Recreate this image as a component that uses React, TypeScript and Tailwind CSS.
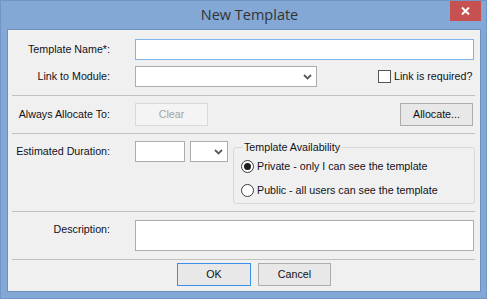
import React from "react";

const font = { fontFamily: '"Liberation Sans", Arial, sans-serif' };

function Chevron() {
  return (
    <svg width="9" height="6" viewBox="0 0 9 6" className="shrink-0">
      <path d="M1 1 L4.5 4.5 L8 1" fill="none" stroke="#5a5a5a" strokeWidth="1.8" />
    </svg>
  );
}

function Label({ children, className = "" }: { children: React.ReactNode; className?: string }) {
  return (
    <div className={`w-[102px] shrink-0 text-right text-[10.7px] leading-[13px] text-[#101020] ${className}`}>
      {children}
    </div>
  );
}

function Sep() {
  return <div className="ml-[4px] h-px w-[463px] shrink-0 bg-[#c1c1c1]" />;
}

function Button({
  children,
  className = "",
  disabled = false,
  focused = false,
}: {
  children: React.ReactNode;
  className?: string;
  disabled?: boolean;
  focused?: boolean;
}) {
  const cls = disabled
    ? "border-[#d9d9d9] bg-[#f4f4f4] text-[#a3a3a3]"
    : focused
    ? "border-[#3c8fe8] bg-[#e8e8e8] text-[#101010]"
    : "border-[#adadad] bg-[#e8e8e8] text-[#101010]";
  return (
    <div
      className={`flex h-[23px] shrink-0 items-center justify-center border text-[10.7px] ${cls} ${className}`}
    >
      {children}
    </div>
  );
}

function Radio({ checked, label }: { checked: boolean; label: string }) {
  return (
    <div className="flex items-center">
      <div className="flex h-[13px] w-[13px] items-center justify-center rounded-full border border-[#3c3c3c] bg-white">
        {checked && <div className="h-[7px] w-[7px] rounded-full bg-[#1e1e1e]" />}
      </div>
      <span className="ml-[3px] text-[10.7px] leading-[13px] text-[#101020]">{label}</span>
    </div>
  );
}

export default function App() {
  return (
    <div
      style={font}
      className="flex h-[299px] w-[487px] flex-col border border-[#7196c6] bg-[#83a8d6]"
    >
      {/* Title bar */}
      <div className="relative flex h-[28px] shrink-0 items-start">
        <div
          className="flex h-[28px] flex-1 items-center justify-center pl-[12px] text-[14.5px] text-[#333333]"
          style={{ fontFamily: '"Open Sans", "Noto Sans", sans-serif' }}
        >
          New Template
        </div>
        <div className="absolute right-[5px] top-0 flex h-[20px] w-[31px] items-center justify-center bg-[#c75050]">
          <svg width="9" height="8" viewBox="0 0 9 8">
            <path d="M1 0.5 L8 7.5 M8 0.5 L1 7.5" stroke="#ffffff" strokeWidth="2" />
          </svg>
        </div>
      </div>

      {/* Client area */}
      <div className="ml-[6px] flex h-[263px] w-[474px] shrink-0 flex-col border border-[#6e90bd] bg-[#f0f0f0]">
        <div className="flex h-[261px] flex-col pt-[9px]">
          {/* Row 1 */}
          <div className="flex h-[21px] items-center">
            <Label>Template Name*:</Label>
            <div className="ml-[25px] h-[21px] w-[339px] border border-[#7eb4ea] bg-white" />
          </div>
          {/* Row 2 */}
          <div className="mt-[6px] flex h-[21px] items-center">
            <Label>Link to Module:</Label>
            <div className="ml-[25px] flex h-[21px] w-[182px] items-center justify-end border border-[#acacac] bg-white pr-[4px]">
              <Chevron />
            </div>
            <div className="ml-[61px] flex items-center">
              <div className="h-[13px] w-[13px] border border-[#555555] bg-white" />
              <span className="ml-[3px] text-[10.7px] leading-[13px] text-[#101020]">Link is required?</span>
            </div>
          </div>
          <div className="mt-[8px]">
            <Sep />
          </div>
          {/* Row 3 */}
          <div className="mt-[7px] flex h-[23px] items-center">
            <Label>Always Allocate To:</Label>
            <Button disabled className="ml-[25px] w-[73px]">
              Clear
            </Button>
            <Button className="ml-auto mr-[7px] w-[73px]">Allocate...</Button>
          </div>
          <div className="mt-[7px]">
            <Sep />
          </div>
          {/* Row 4 */}
          <div className="mt-[7px] flex h-[63px] items-start">
            <div className="flex h-[21px] items-center">
              <Label>Estimated Duration:</Label>
              <div className="ml-[25px] h-[21px] w-[50px] border border-[#acacac] bg-white" />
              <div className="ml-[5px] flex h-[21px] w-[38px] items-center justify-end border border-[#acacac] bg-white pr-[4px]">
                <Chevron />
              </div>
            </div>
            <fieldset className="ml-[5px] h-[63px] w-[242px] rounded-[3px] border border-[#d8d8d8] px-[7px]">
              <legend className="ml-[2px] px-[1px] text-[10.7px] leading-[13px] text-[#101020]">
                Template Availability
              </legend>
              <div className="mt-[6px] flex flex-col gap-[11px]">
                <Radio checked label="Private - only I can see the template" />
                <Radio checked={false} label="Public - all users can see the template" />
              </div>
            </fieldset>
          </div>
          <div className="mt-[7px]">
            <Sep />
          </div>
          {/* Row 5 */}
          <div className="mt-[8px] flex h-[31px] items-start">
            <Label className="pt-[3px]">Description:</Label>
            <div className="ml-[25px] h-[31px] w-[339px] border border-[#acacac] bg-white" />
          </div>
          <div className="mt-[8px]">
            <Sep />
          </div>
          {/* Buttons */}
          <div className="mt-[3px] flex h-[23px] items-center">
            <Button focused className="ml-[169px] w-[74px]">
              OK
            </Button>
            <Button className="ml-[7px] w-[73px]">Cancel</Button>
          </div>
        </div>
      </div>
    </div>
  );
}
